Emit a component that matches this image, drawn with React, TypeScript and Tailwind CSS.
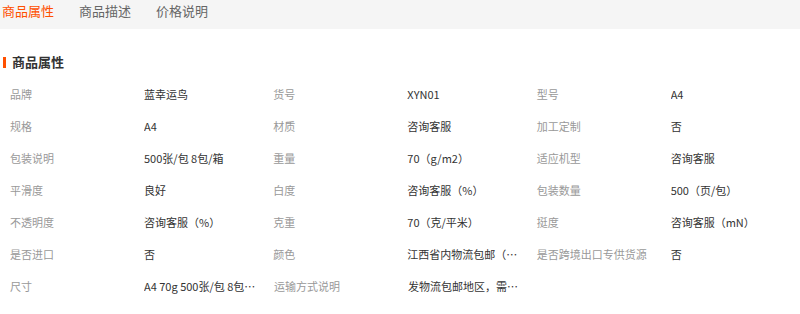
import React from "react";

const rows: [string, string][][] = [
  [["品牌", "蓝幸运鸟"], ["货号", "XYN01"], ["型号", "A4"]],
  [["规格", "A4"], ["材质", "咨询客服"], ["加工定制", "否"]],
  [["包装说明", "500张/包 8包/箱"], ["重量", "70（g/m2）"], ["适应机型", "咨询客服"]],
  [["平滑度", "良好"], ["白度", "咨询客服（%）"], ["包装数量", "500（页/包）"]],
  [["不透明度", "咨询客服（%）"], ["克重", "70（克/平米）"], ["挺度", "咨询客服（mN）"]],
  [["是否进口", "否"], ["颜色", "江西省内物流包邮（省外按重量计费）"], ["是否跨境出口专供货源", "否"]],
  [["尺寸", "A4 70g 500张/包 8包/箱"], ["运输方式说明", "发物流包邮地区，需自提"]],
];

export default function App() {
  const tabs = ["商品属性", "商品描述", "价格说明"];
  return (
    <div className="w-[800px] h-[314px] bg-white font-['Noto_Sans_CJK_SC',sans-serif] overflow-hidden">
      {/* Tabs */}
      <div className="h-[29px] bg-[#f5f5f5] flex items-start pt-[2px] pl-[2px] gap-[25px]">
        {tabs.map((t, i) => (
          <span
            key={t}
            className={`text-[13px] leading-[18px] ${i === 0 ? "text-[#ff5000]" : "text-[#666]"}`}
          >
            {t}
          </span>
        ))}
      </div>

      {/* Section title */}
      <div className="flex items-center mt-[25px] h-[16px]">
        <span className="ml-[3px] w-[3px] h-[11px] bg-[#ff5000]" />
        <span className="ml-[6px] text-[13px] font-bold text-[#333] leading-[16px]">商品属性</span>
      </div>

      {/* Attribute grid */}
      <div className="mt-[8px] pl-[10px]">
        {rows.map((row, ri) => (
          <div key={ri} className="flex h-[32px] items-center">
            {row.map(([label, value]) => (
              <div key={label} className="flex w-[264px] text-[11px] leading-[16px]">
                <span className="w-[134px] text-[#999] whitespace-nowrap">{label}</span>
                <span className="w-[112px] text-[#333] whitespace-nowrap overflow-hidden text-ellipsis">
                  {value}
                </span>
              </div>
            ))}
          </div>
        ))}
      </div>
    </div>
  );
}
